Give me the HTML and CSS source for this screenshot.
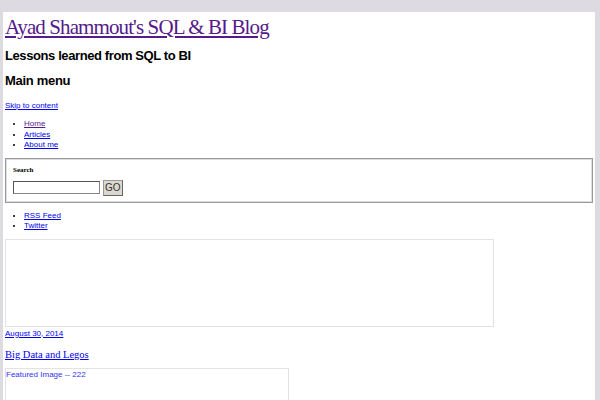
FILE: index.html
```html
<!DOCTYPE html>
<html lang="en">
<head>
  <meta charset="UTF-8">
  <title>Ayad Shammout's SQL &amp; BI Blog</title>
  <link rel="stylesheet" href="styles.css">
</head>
<body>
  <div class="page">
    <header class="site-header">
      <h1 class="site-title"><a class="visited" href="#">Ayad Shammout's SQL &amp; BI Blog</a></h1>
      <h2 class="site-desc">Lessons learned from SQL to BI</h2>
    </header>

    <nav class="main-nav">
      <h3 class="menu-title">Main menu</h3>
      <a class="skip" href="#content">Skip to content</a>
      <ul class="links">
        <li><a class="visited" href="#">Home</a></li>
        <li><a href="#">Articles</a></li>
        <li><a href="#">About me</a></li>
      </ul>
    </nav>

    <form class="search">
      <fieldset>
        <label for="s">Search</label>
        <div class="search-row">
          <input type="text" id="s">
          <button type="button">GO</button>
        </div>
      </fieldset>
    </form>

    <ul class="links">
      <li><a href="#">RSS Feed</a></li>
      <li><a href="#">Twitter</a></li>
    </ul>

    <div class="banner"></div>

    <div id="content" class="post">
      <a class="post-date" href="#">August 30, 2014</a>
      <h2 class="post-title"><a href="#">Big Data and Legos</a></h2>
      <div class="featured">Featured Image -- 222</div>
    </div>
  </div>
</body>
</html>
```

FILE: styles.css
```css
body {
  margin: 0;
  background: #dedae1;
  font-family: "Liberation Sans", Arial, sans-serif;
  color: #000;
}
a {
  color: #0000ee;
}
a.visited {
  color: #551a8b;
}
.page {
  background: white;
  margin: 12px 5px 0 3px;
  padding: 1px 2px 0 2px;
  height: 400px;
}
.site-title {
  font-family: "Liberation Serif", serif;
  font-weight: normal;
  font-size: 21px;
  letter-spacing: -0.9px;
  margin: 1px 0 0;
  line-height: 26px;
}
.site-desc {
  font-size: 13px;
  font-weight: bold;
  letter-spacing: -0.4px;
  margin: 8px 0 0;
  line-height: 16px;
}
.menu-title {
  font-size: 13px;
  font-weight: bold;
  letter-spacing: -0.3px;
  margin: 9px 0 0;
  line-height: 16px;
}
.skip {
  display: block;
  font-size: 8px;
  margin-top: 11px;
  line-height: 11px;
}
.links {
  margin: 8px 0 0;
  padding-left: 19px;
  font-size: 8px;
  line-height: 10.5px;
}
.search fieldset {
  margin: 7px 0 0;
  padding: 6px 7px 6px;
  border: 1px solid #999;
  box-shadow: inset 0 0 0 1px #ddd;
}
.search label {
  display: block;
  font-family: "Liberation Serif", serif;
  font-size: 7px;
  font-weight: bold;
  margin-top: 1px;
}
.search-row {
  display: flex;
  align-items: center;
  gap: 3px;
  margin-top: 6px;
}
.search input {
  width: 83px;
  height: 9px;
  padding: 1px;
  border: 1px solid #888;
  border-top-color: #555;
  border-left-color: #555;
  font-size: 9px;
}
.search button {
  height: 16px;
  padding: 0 1px;
  font-size: 10px;
  font-family: "Liberation Sans", sans-serif;
  color: #333;
  background: #dcd8d0;
  border: 1px solid #999;
  border-right-color: #666;
  border-bottom-color: #666;
}
.banner {
  margin-top: 7px;
  width: 487px;
  height: 86px;
  border: 1px solid #e2e2e2;
}
.post-date {
  display: block;
  font-size: 8px;
  line-height: 11px;
  margin-top: 1px;
}
.post-title {
  font-family: "Liberation Serif", serif;
  font-size: 10.5px;
  font-weight: normal;
  margin: 9px 0 0;
  line-height: 14px;
}
.featured {
  margin-top: 6px;
  width: 282px;
  height: 60px;
  border: 1px solid #e2e2e2;
  color: #3333ee;
  font-size: 8px;
  line-height: 11px;
}
```
